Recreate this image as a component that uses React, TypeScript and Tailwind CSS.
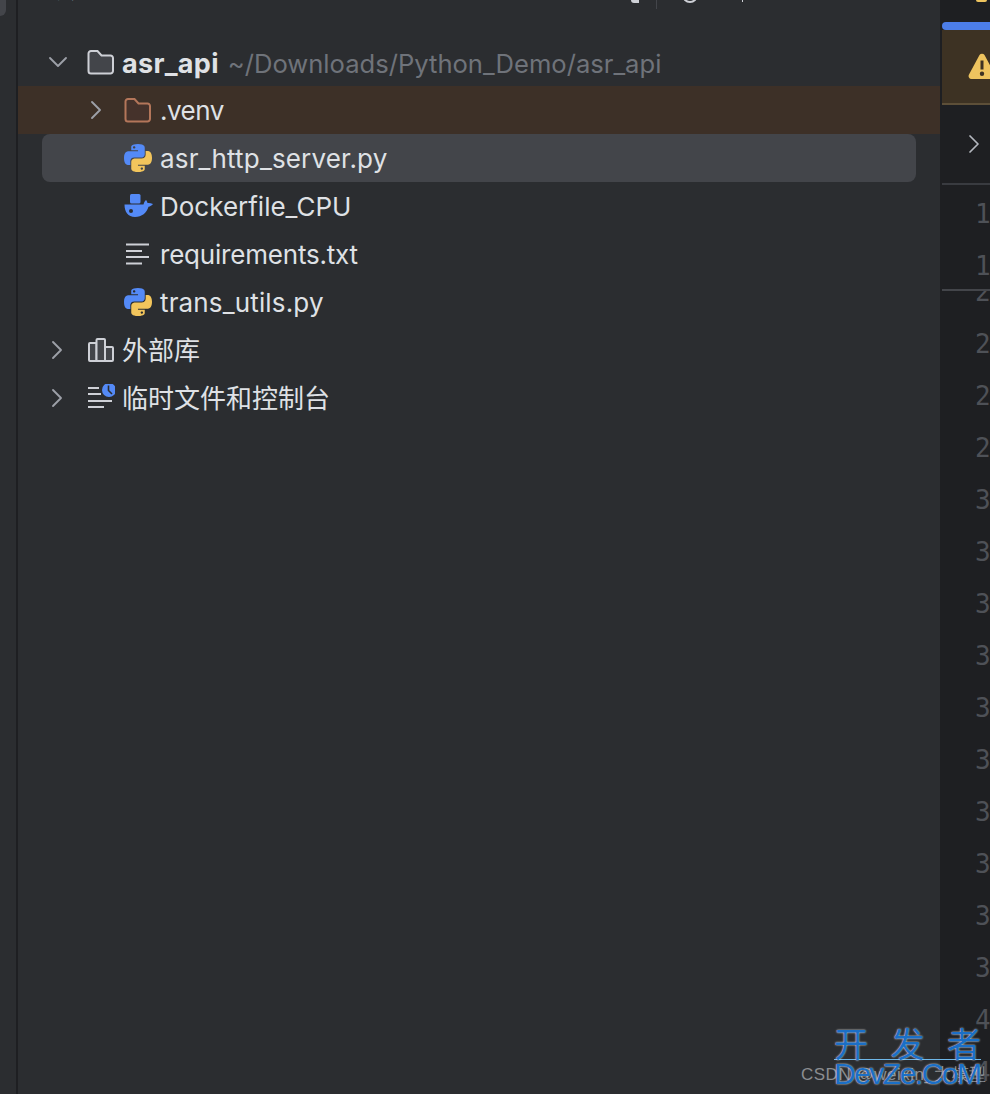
import { ChevronDown, ChevronRight } from "lucide-react";
import type { ReactNode } from "react";

function PythonIcon() {
  return (
    <svg viewBox="0 0 24 24" className="h-7 w-7 shrink-0">
      <path
        fill="#548af7"
        d="M11.914 0C5.82 0 6.2 2.656 6.2 2.656l.007 2.752h5.814v.826H3.9S0 5.789 0 11.969c0 6.18 3.403 5.96 3.403 5.96h2.03v-2.867s-.109-3.42 3.35-3.42h5.766s3.24.052 3.24-3.148V3.202S18.28 0 11.913 0zM8.708 1.85c.578 0 1.046.47 1.046 1.052 0 .581-.468 1.051-1.046 1.051-.579 0-1.046-.47-1.046-1.051 0-.582.467-1.052 1.046-1.052z"
      />
      <path
        fill="#f2c55c"
        d="M12.087 24c6.092 0 5.712-2.656 5.712-2.656l-.007-2.752h-5.814v-.826h8.123s3.9.445 3.9-5.735c0-6.18-3.404-5.96-3.404-5.96h-2.03v2.867s.109 3.42-3.35 3.42H9.45s-3.24-.052-3.24 3.148v5.292S5.72 24 12.087 24zm3.206-1.85c-.578 0-1.046-.47-1.046-1.052 0-.581.468-1.051 1.046-1.051.579 0 1.046.47 1.046 1.051 0 .582-.467 1.052-1.046 1.052z"
      />
    </svg>
  );
}

function DockerIcon() {
  return (
    <svg viewBox="0 0 30 28" className="h-7 w-[30px] shrink-0">
      <rect x="6" y="2" width="10.5" height="9.5" rx="1.5" fill="#548af7" />
      <path
        fill="#548af7"
        fillRule="evenodd"
        d="M0.5 12.5H19.5C20 11 20.5 9 22 8C23 9 23.2 10.2 23.5 11C25 10.7 27 11 29 12C28 13.5 26 14.5 24.5 14.8C22.5 21 18 25 11 25C4 25 0.5 20 0.5 12.5ZM7 17a2 2 0 1 0 0 4a2 2 0 1 0 0-4Z"
      />
    </svg>
  );
}

function TextIcon() {
  return (
    <svg viewBox="0 0 28 28" className="h-7 w-7 shrink-0" stroke="#ced0d6" strokeWidth="2">
      <path d="M2 4.5H25M2 11H18M2 17H25M2 23.5H18" />
    </svg>
  );
}

function FolderIcon({ stroke, fill }: { stroke: string; fill: string }) {
  return (
    <svg viewBox="0 0 28 28" className="h-7 w-7 shrink-0" fill={fill} stroke={stroke} strokeWidth="2">
      <path d="M1.5 5.5a2.5 2.5 0 0 1 2.5-2.5h6.5l4 4.5h9a2.5 2.5 0 0 1 2.5 2.5v13a2.5 2.5 0 0 1-2.5 2.5H4a2.5 2.5 0 0 1-2.5-2.5Z" />
    </svg>
  );
}

function LibraryIcon() {
  return (
    <svg viewBox="0 0 28 28" className="h-7 w-7 shrink-0" fill="#43454a" stroke="#ced0d6" strokeWidth="2">
      <path d="M2 8a1 1 0 0 1 1-1H9.5V25H3a1 1 0 0 1-1-1Z" />
      <path d="M9.5 4a1 1 0 0 1 1-1H17a1 1 0 0 1 1 1V25H9.5Z" />
      <path d="M18 11H25a1 1 0 0 1 1 1V24a1 1 0 0 1-1 1H18Z" />
    </svg>
  );
}

function ScratchIcon() {
  return (
    <svg viewBox="0 0 28 28" className="h-7 w-7 shrink-0">
      <path d="M1 4H12M1 10H14M1 17H25M1 23H17" stroke="#ced0d6" strokeWidth="2" />
      <circle cx="22" cy="6" r="7" fill="#548af7" />
      <path d="M21.5 1.5V6.5L25 10" fill="none" stroke="#2b2d30" strokeWidth="1.6" />
    </svg>
  );
}

function Row({
  indent,
  chevron,
  icon,
  tone = "",
  gap = "ml-[7px]",
  children,
}: {
  indent: string;
  chevron?: ReactNode;
  icon: ReactNode;
  tone?: string;
  gap?: string;
  children: ReactNode;
}) {
  return (
    <div className={`flex h-12 items-center ${tone}`}>
      <div className={`flex shrink-0 items-center ${indent}`}>{chevron}</div>
      {icon}
      <div className={`${gap} flex items-baseline whitespace-nowrap pt-0.5 text-[26px] leading-none text-[#dfe1e5]`}>
        {children}
      </div>
    </div>
  );
}

const gutter = ["2", "2", "2", "2", "3", "3", "3", "3", "3", "3", "3", "3", "3", "3", "4", "4"];

export default function App() {
  return (
    <div className="flex h-[1094px] w-[990px] overflow-hidden bg-[#2b2d30] font-['Inter','Noto_Sans_CJK_SC',sans-serif]">
      {/* tool window strip */}
      <div className="w-[18px] shrink-0 border-r-2 border-[#1e1f22] bg-[#2b2d30]">
        <div className="h-4 w-1.5 rounded-br-md bg-[#43454a]" />
      </div>

      {/* project tree */}
      <div className="min-w-0 flex-1">
        <div className="flex h-[38px] items-start">
          <div className="ml-[31px] -mt-[24px] text-[26px] leading-none text-[#dfe1e5]">项目</div>
          <div className="ml-auto mr-[197px] flex items-start">
            <div className="h-[3px] w-2 rounded-bl-sm bg-[#ced0d6]" />
            <div className="ml-[17px] h-[9px] w-px bg-[#43454a]" />
            <div className="ml-[25px] -mt-[13px] h-4 w-4 rounded-full border-2 border-[#ced0d6]" />
            <div className="ml-[44px] h-0.5 w-px bg-[#ced0d6]" />
          </div>
        </div>

        <Row
          indent="w-[69px] pl-6"
          chevron={<ChevronDown className="h-8 w-8 shrink-0 text-[#9da0a8]" strokeWidth={1.4} />}
          icon={<FolderIcon stroke="#ced0d6" fill="#43454a" />}
        >
          <span className="text-[27px] font-bold tracking-[0.3px]">asr_api</span>
          <span className="ml-[9px] text-[25.6px] text-[#6f737a]">~/Downloads/Python_Demo/asr_api</span>
        </Row>
        <Row
          tone="bg-[#3d3027]"
          indent="w-[106px] pl-[62px]"
          chevron={<ChevronRight className="h-8 w-8 shrink-0 text-[#9da0a8]" strokeWidth={1.4} />}
          icon={<FolderIcon stroke="#b4765a" fill="#45322b" />}
          gap="ml-2"
        >
          <span className="tracking-[-0.5px]">.venv</span>
        </Row>
        <Row tone="mx-6 rounded-lg bg-[#43454a]" indent="w-[82px]" icon={<PythonIcon />} gap="ml-2">
          <span className="tracking-[0.17px]">asr_http_server.py</span>
        </Row>
        <Row indent="w-[106px]" icon={<DockerIcon />} gap="ml-1.5">
          Dockerfile_CPU
        </Row>
        <Row indent="w-[106px]" icon={<TextIcon />} gap="ml-2">
          <span className="tracking-[-0.2px]">requirements.txt</span>
        </Row>
        <Row indent="w-[106px]" icon={<PythonIcon />} gap="ml-2">
          <span className="tracking-[0.15px]">trans_utils.py</span>
        </Row>
        <Row
          indent="w-[69px] pl-[23px]"
          chevron={<ChevronRight className="h-8 w-8 shrink-0 text-[#9da0a8]" strokeWidth={1.4} />}
          icon={<LibraryIcon />}
        >
          外部库
        </Row>
        <Row
          indent="w-[69px] pl-[23px]"
          chevron={<ChevronRight className="h-8 w-8 shrink-0 text-[#9da0a8]" strokeWidth={1.4} />}
          icon={<ScratchIcon />}
        >
          临时文件和控制台
        </Row>
      </div>

      {/* editor edge */}
      <div className="flex w-[50px] shrink-0 flex-col overflow-hidden border-l-2 border-[#1e1f22] bg-[#1e1f22]">
        <div className="h-[22px] shrink-0 pl-[34px]">
          <div className="h-0.5 w-[11px] rounded-b-sm bg-[#eec45f]" />
        </div>
        <div className="h-2 shrink-0 rounded-l-sm bg-[#4c7de8]" />
        <div className="flex h-[75px] shrink-0 items-center border-b-2 border-[#5d4f38] bg-[#3d3223] pb-[2px] pl-[26px]">
          <svg viewBox="0 0 28 26" className="h-[26px] w-7 shrink-0">
            <path
              fill="#eec45f"
              fillRule="evenodd"
              d="M11.5 2a3 3 0 0 1 5 0L27 21.5a3 3 0 0 1-2.5 4.5H3.5A3 3 0 0 1 1 21.5ZM12.5 7.5v9h3v-9ZM14 18.5a2.2 2.2 0 1 0 0 4.4a2.2 2.2 0 1 0 0-4.4Z"
            />
          </svg>
        </div>
        <div className="flex h-20 shrink-0 items-center border-b-2 border-[#393b40] pl-4">
          <ChevronRight className="h-8 w-8 shrink-0 text-[#b4b8bf]" strokeWidth={1.3} />
        </div>
        <div className="relative z-10 h-[106px] shrink-0 border-b-2 border-[#43454a] bg-[#1e1f22] pl-[33px] pt-[3px] font-['DejaVu_Sans_Mono',monospace] text-[26px] leading-[52px] text-[#4e5157]">
          <div>1</div>
          <div>1</div>
        </div>
        <div className="-mt-[26px] pl-[33px] pt-px font-['DejaVu_Sans_Mono',monospace] text-[26px] leading-[52px] text-[#4e5157]">
          {gutter.map((n, i) => (
            <div key={i}>{n}</div>
          ))}
        </div>
      </div>

      {/* watermark */}
      <div className="absolute left-[801px] top-[1063px] whitespace-nowrap font-['Liberation_Sans',sans-serif] text-[17px] leading-6 tracking-[0.5px] text-[#8b8d91]">
        CSDN @weixin_大模型
      </div>
      <div className="absolute left-[834px] top-[1026px] w-[147px] font-['Noto_Sans_CJK_SC',sans-serif] text-[#1b6fc6]">
        <div className="flex justify-between border-b border-[#6fb7e8] text-[34px] leading-[33px] [text-shadow:0_0_2px_#fff]">
          <span>开</span>
          <span>发</span>
          <span>者</span>
        </div>
        <div className="whitespace-nowrap font-['Liberation_Sans',sans-serif] text-[30px] leading-[28px] tracking-[-1.5px] [text-shadow:0_0_2px_#fff]">
          DevZe.CoM
        </div>
      </div>
    </div>
  );
}
